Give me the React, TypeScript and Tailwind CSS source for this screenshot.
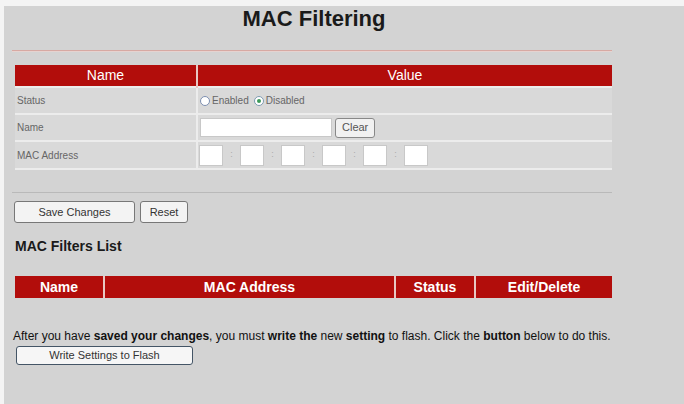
export default function App() {
  const font = { fontFamily: '"Liberation Sans", Arial, sans-serif' };
  const macBoxes = [0, 1, 2, 3, 4, 5];

  return (
    <div className="w-[684px] h-[404px] bg-[#f4f4f4] pt-[6px] pl-[4px] overflow-hidden" style={font}>
      <div className="w-[680px] h-[398px] bg-[#d3d3d3] pl-[8px]">
        <div className="w-[600px]">
          <h1 className="text-center text-[22px] font-bold text-[#1a1a1a] leading-[26px] pl-[4px]">MAC Filtering</h1>

          <div className="mt-[18px] h-[2px] bg-[#d7a9a3] border-b border-[#e6d3d0]" />

          <table className="mt-[13px] ml-[3px] w-[597px] border-collapse text-[10px] text-[#666]">
            <thead>
              <tr className="bg-[#b20d0b] text-white text-[14px] h-[20px]">
                <th className="w-[182px] font-normal border-r-2 border-[#e8c7c3]">Name</th>
                <th className="font-normal">Value</th>
              </tr>
            </thead>
            <tbody>
              <tr className="h-[27px] bg-[#d9d9d9] border-t-2 border-[#ececec]">
                <td className="pl-[2px] border-r-2 border-[#ececec]">Status</td>
                <td className="pl-[2px]">
                  <div className="flex items-center gap-[2px]">
                    <span className="w-[10px] h-[10px] rounded-full border border-[#7d8fb0] bg-white" />
                    <span>Enabled</span>
                    <span className="ml-[3px] w-[10px] h-[10px] rounded-full border border-[#7d9ab0] bg-white flex items-center justify-center">
                      <span className="w-[4px] h-[4px] rounded-full bg-[#3d9a5a]" />
                    </span>
                    <span>Disabled</span>
                  </div>
                </td>
              </tr>
              <tr className="h-[27px] bg-[#d9d9d9] border-t-2 border-[#ececec]">
                <td className="pl-[2px] border-r-2 border-[#ececec]">Name</td>
                <td className="pl-[2px]">
                  <div className="flex items-center gap-[3px]">
                    <div className="w-[132px] h-[19px] bg-white border border-[#c8c8c8]" />
                    <button className="h-[20px] px-[6px] text-[11px] text-[#555] bg-[#f1f1f1] border border-[#888] rounded-[3px]">Clear</button>
                  </div>
                </td>
              </tr>
              <tr className="h-[28px] bg-[#d9d9d9] border-t-2 border-b-2 border-[#ececec]">
                <td className="pl-[2px] border-r-2 border-[#ececec]">MAC Address</td>
                <td className="pl-[1px]">
                  <div className="flex items-center">
                    {macBoxes.map((i) => (
                      <div key={i} className="flex items-center">
                        {i > 0 && <span className="w-[17px] text-center text-[9px] text-[#aaa]">:</span>}
                        <div className="w-[24px] h-[21px] bg-white border border-[#c8c8c8]" />
                      </div>
                    ))}
                  </div>
                </td>
              </tr>
            </tbody>
          </table>

          <div className="mt-[22px] h-[1px] bg-[#b9b9b9]" />

          <div className="mt-[8px] ml-[2px] flex gap-[5px]">
            <button className="w-[121px] h-[22px] text-[11px] text-[#333] bg-[#f3f3f3] border border-[#777] rounded-[3px]">Save Changes</button>
            <button className="w-[48px] h-[22px] text-[11px] text-[#333] bg-[#f3f3f3] border border-[#777] rounded-[3px]">Reset</button>
          </div>

          <h2 className="mt-[14px] ml-[3px] text-[14px] font-bold text-[#1a1a1a] leading-[18px]">MAC Filters List</h2>

          <table className="mt-[21px] ml-[3px] w-[597px] border-collapse">
            <thead>
              <tr className="bg-[#b20d0b] text-white text-[14px] font-bold h-[22px]">
                <th className="w-[89px] border-r-2 border-[#e8c7c3]">Name</th>
                <th className="w-[291px] border-r-2 border-[#e8c7c3]">MAC Address</th>
                <th className="w-[80px] border-r-2 border-[#e8c7c3]">Status</th>
                <th>Edit/Delete</th>
              </tr>
            </thead>
          </table>

          <p className="mt-[32px] ml-[1px] text-[12px] leading-[12px] text-[#111] whitespace-nowrap">
            After you have <b>saved your changes</b>, you must <b>write the</b> new <b>setting</b> to flash. Click the <b>button</b> below to do this.
          </p>
          <button className="mt-[1px] ml-[4px] w-[177px] h-[19px] text-[11px] text-[#333] bg-[#f6f6f6] border border-[#445566] rounded-[3px]">Write Settings to Flash</button>
        </div>
      </div>
    </div>
  );
}
